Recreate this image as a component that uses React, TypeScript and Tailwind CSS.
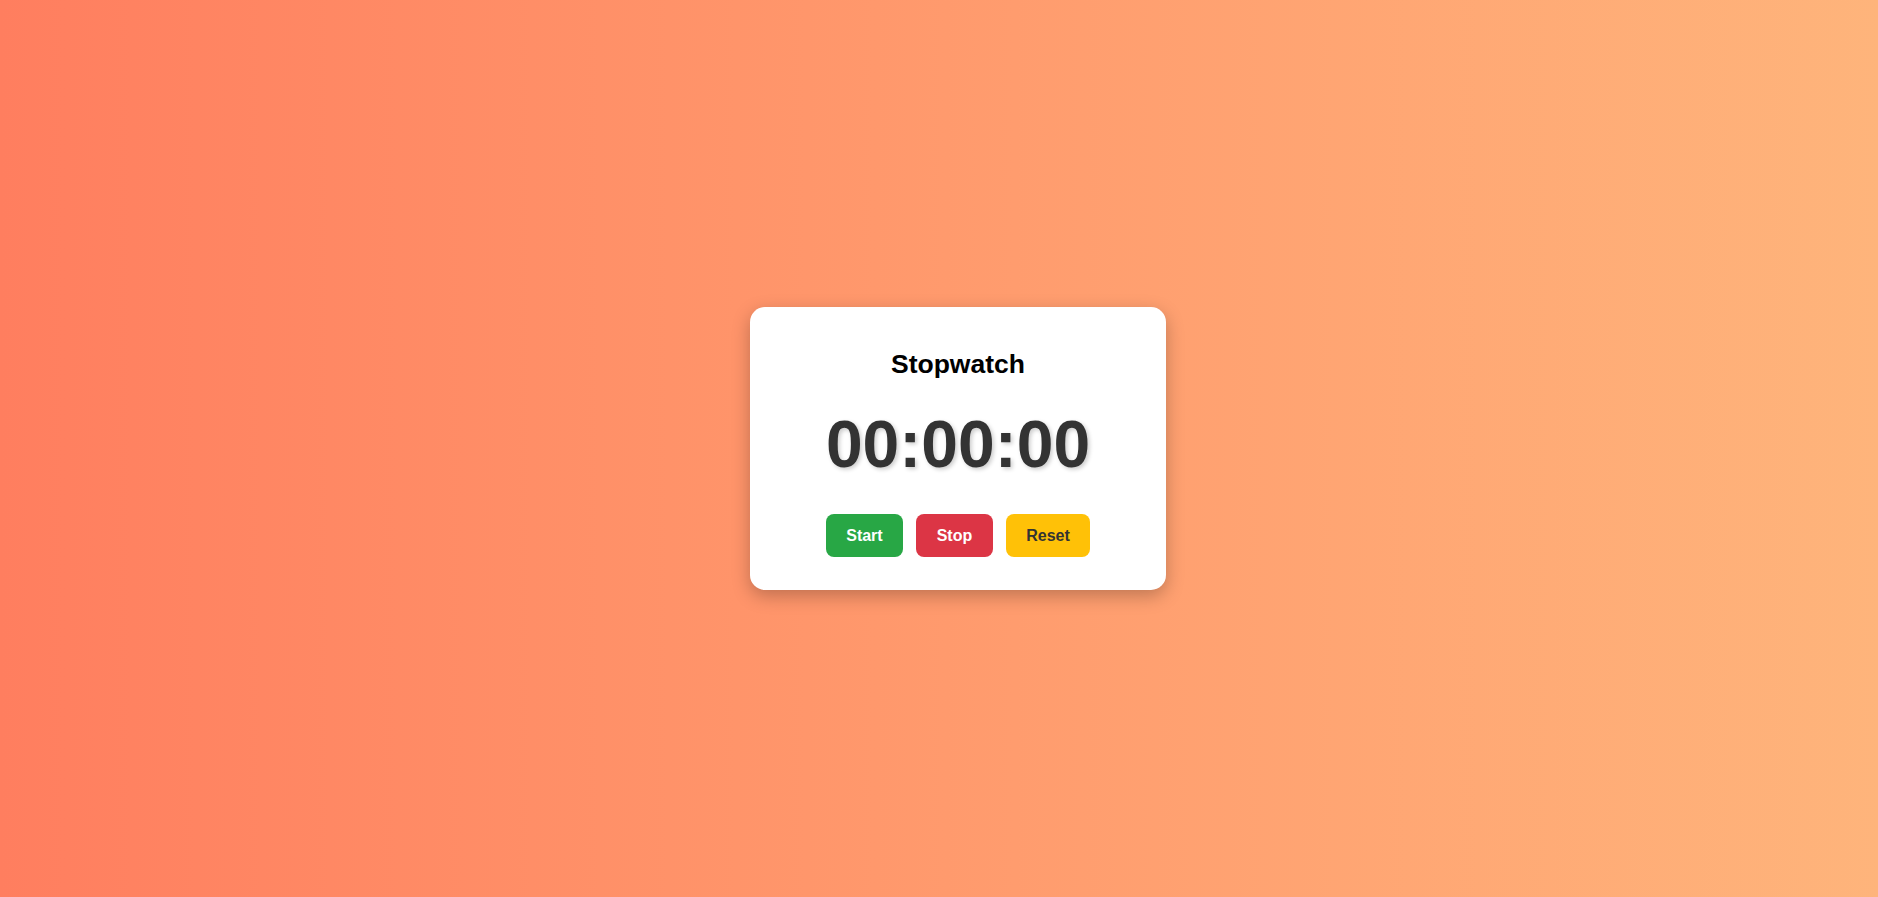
export default function App() {
  return (
    <div
      className="flex min-h-screen items-center justify-center bg-gradient-to-r from-[#ff7e5f] to-[#feb47b] pl-[38px]"
      style={{ fontFamily: '"Liberation Sans", Arial, sans-serif' }}
    >
      <div className="flex w-[416px] flex-col items-center rounded-[15px] bg-white pt-[42px] pb-[33px] shadow-[0_6px_18px_rgba(0,0,0,0.25)]">
        <h2 className="text-[26.5px] leading-[30px] font-bold text-black">Stopwatch</h2>
        <div className="mt-[28px] text-[66px] leading-[74px] font-bold text-[#333] [text-shadow:2px_2px_4px_rgba(0,0,0,0.2)]">
          00:00:00
        </div>
        <div className="mt-[33px] flex gap-[13px]">
          <button className="h-[43px] rounded-lg bg-[#28a745] px-[20.5px] text-base font-bold text-white">Start</button>
          <button className="h-[43px] rounded-lg bg-[#dc3545] px-[20.5px] text-base font-bold text-white">Stop</button>
          <button className="h-[43px] rounded-lg bg-[#ffc107] px-[20.5px] text-base font-bold text-[#333]">Reset</button>
        </div>
      </div>
    </div>
  );
}
